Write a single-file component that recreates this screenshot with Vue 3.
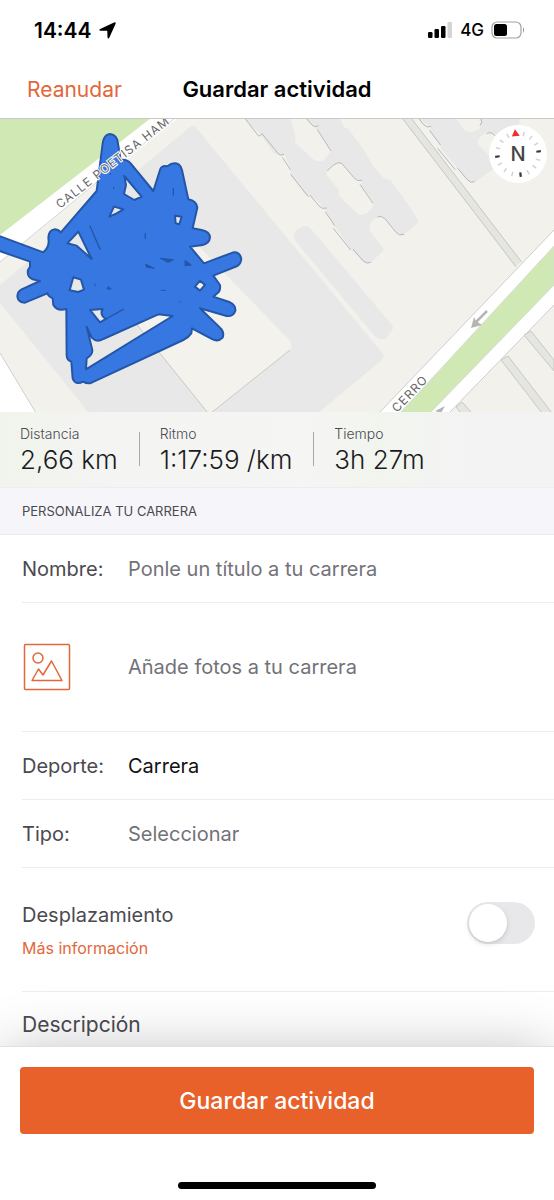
<template>
  <div class="screen">
    <div class="status-bar">
      <div class="clock">
        <span>14:44</span>
        <svg width="17" height="17" viewBox="0 0 17 17" aria-hidden="true">
          <path d="M15 .5Q17.200 -.3 16.600 1.800L10.400 15.600Q9 17.800 8.500 15.300L8.300 9.200Q8.200 8.800 7.800 8.800L1.600 8.700Q-.8 8.300 1.200 6.900Z" fill="#000" />
        </svg>
      </div>
      <div class="signals">
        <svg width="25" height="17" viewBox="0 0 25 17" aria-hidden="true">
          <rect x="0" y="10" width="4.500" height="6" rx="1.200" />
          <rect x="6.500" y="7" width="4.500" height="9" rx="1.200" />
          <rect x="13" y="4" width="4.500" height="12" rx="1.200" />
          <rect x="19.500" y="0" width="4.500" height="16" rx="1.200" fill="#d4d4d4" />
        </svg>
        <span class="network">4G</span>
        <svg width="34" height="18" viewBox="0 0 34 18" aria-hidden="true">
          <rect x="1" y="1" width="29" height="16" rx="5" fill="none" stroke="#a2a2a2" stroke-width="1.200" />
          <rect x="3" y="3" width="13" height="12" rx="2.500" />
          <path d="M32 6 Q34 9 32 12 Z" fill="#8e8e8e" />
        </svg>
      </div>
    </div>

    <header class="nav-bar">
      <button type="button" class="resume">Reanudar</button>
      <h1>Guardar actividad</h1>
    </header>

    <main class="content">
      <section class="map">
        <svg class="map-canvas" viewBox="0 119 554 293" preserveAspectRatio="xMidYMid slice" role="img" aria-label="Mapa">
          <rect y="118" width="554" height="295" fill="#f2f1ec" />

          <!-- calle y parque, arriba a la izquierda -->
          <path d="M0 118H178L0 262Z" fill="#fff" />
          <path d="M175 118L0 262" stroke="#d2d2d0" />
          <path d="M0 118H151L0 235Z" fill="#d0e9b4" />
          <path d="M0 353L36 413H0Z" fill="#fff" />
          <path d="M0 353L36 413" stroke="#cfcfcc" />

          <!-- edificio grande -->
          <path d="M190 127Q194 124 198 130L383 354Q385 357 382 360L318 413H89L0 303V285Z" fill="#e8e8e8" />
          <path d="M190 237L290 341Q293 345 290 350L211 413H208L110 290Z" fill="#f3f2ec" />
          <path d="M137 325L160 353L110 360L95 330Z" fill="#e8e8e8" />
          <path d="M137 325L208 413M211 413L290 350" fill="none" stroke="#c9c9c5" />

          <!-- bloques de viviendas -->
          <g transform="translate(274 115) scale(.3333)">
            <path d="M-87 10L-36 65L0 115Q12 125 30 120L50 160V180L100 245L120 248L155 285L182 332L230 402L268 440Q282 450 292 442L325 410Q332 402 325 395L288 348Q280 330 300 312Q315 300 332 310L370 355Q380 365 392 357L430 325Q435 318 428 308L400 265L350 196L330 190L300 157L270 105L220 38H212L198 10Z" fill="#e8e8e9" />
            <path d="M42 0Q62 30 65 85L120 135Q132 142 150 136L172 108L130 45L120 34Q108 30 97 10ZM158 168Q180 145 195 143Q205 143 210 152L245 193Q252 200 262 198V212L296 258Q300 268 294 280Q275 303 258 299Q250 298 242 288L195 242V225L158 180Z" fill="#f2f1ec" />
            <path d="M62 375Q55 355 72 343Q92 326 108 338L354 630Q362 640 350 652L340 665Q322 680 304 665Z" fill="#e8e8e9" />
            <path d="M430 10L470 35L468 50L500 90V100L550 158L580 196Q592 205 604 200L655 165L735 80V10Z" fill="#e8e8e9" />
            <path d="M545 10L568 42Q580 56 596 50L616 42Q626 30 618 10ZM612 88Q606 75 625 60Q640 48 655 56L665 65L650 125Z" fill="#f2f1ec" />
            <path d="M-87 10L-52 56Q-45 70 -36 56L12 115Q20 124 30 118M25 127L50 165M50 178L103 245M108 240L135 273Q145 284 158 279M154 290L182 332M178 340L230 405M237 402L268 438Q280 448 290 442M97 10L116 32Q124 38 134 32M130 44L171 108M160 168Q180 145 195 143Q205 143 211 154L240 188Q250 201 264 196M258 208L297 265M310 306Q322 300 334 312L366 352Q375 364 390 358M434 10L450 30Q460 40 472 34M467 46L500 91M491 100L544 164M551 160L580 194Q590 206 602 200M620 10Q628 20 618 32M638 56Q652 48 662 62" fill="none" stroke="#b8b8b8" stroke-width="3" />
            <path d="M385 10H412L742 440L724 455Z" fill="#e5e5e1" />
            <path d="M385 10L726 455M412 10L742 440" stroke="#c6c6c2" stroke-width="3" />
          </g>

          <!-- avenida -->
          <path d="M554 230L379 413H449L554 305Z" fill="#fff" />
          <path d="M554 230L379 413M449 413L554 305" stroke="#cdcdca" />
          <path d="M554 246L400 413H430L554 285Z" fill="#d0e9b4" stroke="#dadad6" />
          <path d="M524 335L531 331L554 360V371ZM501 360L508 356L552 413H542ZM456 407L462 402L472 413H461Z" fill="#e5e5e1" stroke="#c8c8c4" />
          <path d="M487 311L476 322" stroke="#b5b5b5" stroke-width="2.500" />
          <path d="M471 328L474 317L476 321L482 325ZM435 411L445 406L441 413Z" fill="#b5b5b5" />

          <!-- recorrido -->
          <g transform="translate(0 115) scale(.3333)" stroke="#2456a8" stroke-width="6" stroke-linejoin="round" stroke-linecap="round">
            <path
              fill="#3777e2"
              fill-rule="evenodd"
              d="M290 228L308 85Q312 58 330 57Q352 60 354 85L362 135Q380 132 392 145L460 228L480 165Q485 150 502 154Q520 140 536 148Q543 153 546 165L565 253Q590 258 592 278L578 340L605 345Q630 350 630 368Q628 385 608 390L570 395L612 445L700 412Q720 410 724 432Q722 448 712 453L640 482L660 510Q662 522 657 530L640 545L690 562Q708 570 706 588Q700 605 680 603L600 580L660 638Q674 650 668 668Q655 682 635 672L576 640L574 655Q565 668 550 675L270 805Q258 806 250 800Q225 812 218 790L214 740Q200 735 200 720L199 582Q172 590 160 570L158 550Q145 545 142 535L75 563Q55 563 52 545Q52 530 65 523L120 498L98 493Q80 485 84 465L90 455V440L-10 405V360L130 412Q150 395 145 370Q145 345 165 343Q178 345 182 353Z
                M373 183L425 245L403 255L372 237L378 210Z M328 305L342 275L370 283L350 295Z M235 350L202 385L230 392L275 432Z M525 302L545 305L538 328L527 325Z M220 487L243 494L252 524L235 531L209 526Z M270 585L308 582Q298 600 318 612L300 622Z M260 635L275 668Q290 684 310 672L475 598L518 603L258 763L260 730Q278 720 277 705Z M585 515L600 497L615 510L600 527Z"
            />
            <path d="M270 333L300 403M318 612L370 583M520 220V240M436 355V370M341 218V221M331 176V178" fill="none" stroke-width="4" />
            <path d="M482 430L520 434L505 442ZM438 448L463 460L440 457ZM556 436L574 450L556 452ZM484 526H497M285 506V513M322 522H334L325 516ZM538 558L543 563" fill="#2456a8" stroke-width="3" />
          </g>

          <text class="street" transform="translate(60 209) rotate(-38)">CALLE POETISA HAM</text>
          <text class="street" transform="translate(397 413) rotate(-46)">CERRO</text>
        </svg>

        <button type="button" class="compass" aria-label="Norte">
          <svg width="58" height="58" viewBox="-29 -29 58 58" aria-hidden="true">
            <g transform="rotate(-7)">
              <path
                v-for="tick in ticks"
                :key="tick"
                d="M0 -23V-18.500"
                :transform="`rotate(${tick})`"
                :stroke="tick % 90 ? '#d2d2d2' : '#3a3a3a'"
                :stroke-width="tick % 90 ? 1.5 : 2.200"
              />
              <path d="M-4 -18L0 -25L4 -18Z" fill="#ee2f2f" />
            </g>
          </svg>
          <span>N</span>
        </button>
      </section>

      <dl class="stats">
        <div v-for="stat in stats" :key="stat.label" class="stat">
          <dt>{{ stat.label }}</dt>
          <dd>{{ stat.value }}</dd>
        </div>
      </dl>

      <h2 class="section-title">PERSONALIZA TU CARRERA</h2>

      <form id="activity" class="form" @submit.prevent>
        <div class="row">
          <label for="name">Nombre:</label>
          <input id="name" v-model="name" type="text" placeholder="Ponle un título a tu carrera" />
        </div>

        <button type="button" class="row photos">
          <span class="photo-icon">
            <svg width="50" height="48" viewBox="-1 0 50 48" fill="none" stroke="#e2673a" stroke-width="1.500" stroke-linejoin="round" aria-hidden="true">
              <rect x="1.500" y="1.500" width="45" height="45" rx="1" />
              <circle cx="15" cy="15" r="5" />
              <path d="M9 37.500L15.500 26L20 32L28.500 18L39 37.500Z" />
            </svg>
          </span>
          <span>Añade fotos a tu carrera</span>
        </button>

        <div class="row">
          <label for="sport">Deporte:</label>
          <select id="sport" v-model="sport" class="chosen">
            <option>Carrera</option>
          </select>
        </div>

        <div class="row">
          <label for="type">Tipo:</label>
          <select id="type" v-model="type">
            <option value="">Seleccionar</option>
          </select>
        </div>

        <div class="row commute">
          <div class="commute-text">
            <label for="commute">Desplazamiento</label>
            <a href="#">Más información</a>
          </div>
          <input id="commute" v-model="commute" type="checkbox" role="switch" class="switch" />
        </div>

        <div class="row description">
          <input v-model="description" type="text" placeholder="Descripción" aria-label="Descripción" />
        </div>
      </form>
    </main>

    <footer class="actions">
      <button type="submit" form="activity" class="save">Guardar actividad</button>
      <div class="home-indicator"></div>
    </footer>
  </div>
</template>

<script setup>
import { ref } from 'vue';

const name = ref('');
const sport = ref('Carrera');
const type = ref('');
const commute = ref(false);
const description = ref('');

const stats = [
  { label: 'Distancia', value: '2,66 km' },
  { label: 'Ritmo', value: '1:17:59 /km' },
  { label: 'Tiempo', value: '3h 27m' },
];

// marcas de la brújula, sin la del norte
const ticks = [23, 45, 68, 90, 113, 135, 158, 180, 203, 225, 248, 270, 293, 315, 338];
</script>

<style>
body {
  background: #fff;
}
</style>

<style scoped>
.screen {
  display: flex;
  flex-direction: column;
  height: 100vh;
  font-family: Inter, "Liberation Sans", sans-serif;
  font-size: 20px;
  font-weight: 400;
  color: #4a4a50;
  background: #fff;
}

button,
input,
select {
  font: inherit;
  color: inherit;
  border: 0;
  padding: 0;
  margin: 0;
  background: none;
  border-radius: 0;
  outline: 0;
}

button {
  cursor: pointer;
}

.status-bar {
  display: flex;
  justify-content: space-between;
  align-items: center;
  height: 60px;
  padding: 0 29px 0 34px;
  flex-shrink: 0;
  color: #000;
}

.clock,
.signals {
  display: flex;
  align-items: center;
  gap: 7px;
}

.clock {
  font-size: 21px;
  font-weight: 600;
}

.network {
  font-size: 17px;
  font-weight: 500;
}

.nav-bar {
  display: grid;
  grid-template-columns: 1fr auto 1fr;
  align-items: center;
  height: 59px;
  padding: 0 27px;
  border-bottom: 1px solid #c9c9c9;
  box-sizing: border-box;
  flex-shrink: 0;
}

.nav-bar h1 {
  margin: 0;
  font-size: 22px;
  font-weight: 600;
  color: #000;
}

.resume {
  justify-self: start;
  font-size: 21px;
  color: #e2673a;
}

.content {
  flex: 1;
  min-height: 0;
  overflow: hidden auto;
}

.map {
  position: relative;
}

.map-canvas {
  display: block;
  width: 100%;
  height: 293px;
}

.street {
  font-size: 12px;
  letter-spacing: 1px;
  fill: #666;
  stroke: #fff;
  stroke-width: 2px;
  paint-order: stroke;
}

.compass {
  position: absolute;
  top: 6px;
  right: 7px;
  display: grid;
  place-items: center;
  width: 58px;
  height: 58px;
  border-radius: 50%;
  background: #fff;
}

.compass svg,
.compass span {
  grid-area: 1 / 1;
}

.compass span {
  font-weight: 500;
  color: #444;
}

.stats {
  display: flex;
  align-items: center;
  height: 75px;
  margin: 0;
  padding: 0 20px;
  box-sizing: border-box;
  background: linear-gradient(90deg, #f1f4ec, #f4f4f3 20%, #f5f5f4 55%, #f2f5ee 68%, #f3f3f4 85%);
}

.stat {
  position: relative;
  padding-right: 42px;
}

.stat:not(:last-child)::after {
  content: "";
  position: absolute;
  top: 8px;
  right: 20px;
  width: 1px;
  height: 34px;
  background: #a9a9ab;
}

.stat dt {
  font-size: 14px;
  font-weight: 300;
  line-height: 20px;
}

.stat dd {
  margin: 0;
  font-size: 26px;
  font-weight: 300;
  line-height: 32px;
  color: #1b1b1e;
}

.section-title {
  margin: 0;
  padding: 0 22px;
  font-size: 13px;
  font-weight: 400;
  line-height: 46px;
  background: #f6f6fa;
  border-top: 1px solid #ededf0;
  border-bottom: 1px solid #e9e9ed;
}

.form {
  padding-left: 22px;
}

.row {
  display: flex;
  align-items: center;
  width: 100%;
  height: 68px;
  box-sizing: border-box;
  border-bottom: 1px solid #ececee;
}

.row > label,
.photo-icon {
  width: 106px;
  flex-shrink: 0;
  text-align: left;
}

.photo-icon svg {
  display: block;
}

.row > input[type="text"],
select {
  flex: 1;
  min-width: 0;
  appearance: none;
  color: #727279;
}

.row > input::placeholder {
  color: #727279;
  opacity: 1;
}

.row > .chosen {
  color: #111;
}

.photos {
  height: 129px;
  color: #727279;
}

.commute {
  justify-content: space-between;
  align-items: flex-start;
  height: 124px;
  padding-top: 34px;
  padding-right: 19px;
}

.commute-text {
  display: flex;
  flex-direction: column;
  gap: 8px;
  line-height: 26px;
}

.commute-text a {
  font-size: 16px;
  line-height: 24px;
  color: #e2673a;
  text-decoration: none;
}

.switch {
  appearance: none;
  width: 68px;
  height: 42px;
  padding: 2px;
  border-radius: 21px;
  background: #e8e8ea;
}

.switch::before {
  content: "";
  display: block;
  width: 38px;
  height: 38px;
  border-radius: 50%;
  background: #fff;
  box-shadow: 0 2px 5px rgba(0, 0, 0, 0.15);
}

.switch:checked {
  background: #e8602a;
}

.switch:checked::before {
  margin-left: auto;
}

.description {
  height: 54px;
  padding-top: 11px;
  border-bottom: 0;
  font-size: 21px;
}

.description > input::placeholder {
  color: #4a4a50;
}

.actions {
  position: relative;
  display: flex;
  flex-direction: column;
  padding: 20px 20px 11px;
  background: #fff;
  border-top: 1px solid #e0e0e0;
  box-shadow: 0 0 56px -4px rgba(0, 0, 0, 0.25);
}

.save {
  height: 67px;
  border-radius: 4px;
  font-size: 23px;
  font-weight: 500;
  color: #fff;
  background: #e8602a;
}

.home-indicator {
  align-self: center;
  width: 198px;
  height: 7px;
  margin-top: 48px;
  border-radius: 4px;
  background: #000;
}
</style>
